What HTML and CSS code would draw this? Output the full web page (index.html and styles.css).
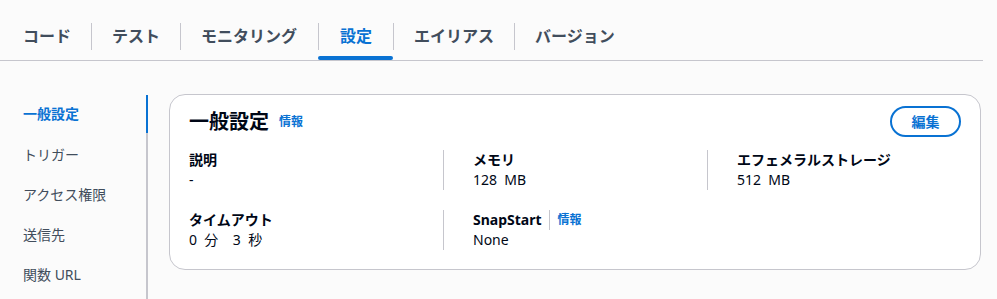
FILE: index.html
```html
<!DOCTYPE html>
<html lang="ja">
<head>
<meta charset="utf-8">
<title>設定</title>
<link rel="stylesheet" href="styles.css">
</head>
<body>
<nav class="tabs">
  <a class="tab first"><span class="tab-label">コード</span></a>
  <a class="tab"><span class="tab-label">テスト</span></a>
  <a class="tab"><span class="tab-label wide">モニタリング</span></a>
  <a class="tab active"><span class="tab-label">設定</span></a>
  <a class="tab"><span class="tab-label">エイリアス</span></a>
  <a class="tab"><span class="tab-label">バージョン</span></a>
</nav>
<div class="main">
  <ul class="side">
    <li class="side-item active">一般設定</li>
    <li class="side-item">トリガー</li>
    <li class="side-item">アクセス権限</li>
    <li class="side-item">送信先</li>
    <li class="side-item">関数 URL</li>
  </ul>
  <section class="card">
    <div class="card-head">
      <div class="title-wrap">
        <h2 class="title">一般設定</h2>
        <a class="info">情報</a>
      </div>
      <button class="edit">編集</button>
    </div>
    <div class="grid">
      <div class="cell">
        <div class="label">説明</div>
        <div class="value">-</div>
      </div>
      <div class="cell sep">
        <div class="label">メモリ</div>
        <div class="value">128&nbsp; MB</div>
      </div>
      <div class="cell sep">
        <div class="label">エフェメラルストレージ</div>
        <div class="value">512&nbsp; MB</div>
      </div>
      <div class="cell">
        <div class="label">タイムアウト</div>
        <div class="value">0&nbsp; 分&nbsp;&nbsp;&nbsp; 3&nbsp; 秒</div>
      </div>
      <div class="cell sep">
        <div class="label label-row"><span>SnapStart</span><span class="mini-sep"></span><a class="info">情報</a></div>
        <div class="value">None</div>
      </div>
    </div>
  </section>
</div>
</body>
</html>
```

FILE: styles.css
```css
* { box-sizing: border-box; }
html, body { margin: 0; padding: 0; }
body {
  background: #fbfbfb;
  font-family: "Noto Sans", "Noto Sans CJK JP", sans-serif;
  color: #000716;
  width: 997px;
  height: 299px;
  overflow: hidden;
}
.tabs {
  display: flex;
  padding: 23px 0 0 2px;
  margin-right: 14px;
  border-bottom: 1px solid #c6c6cd;
}
.tab {
  display: flex;
  flex-direction: column;
  color: #414d5c;
  font-weight: 700;
  font-size: 16px;
}
.tab-label {
  display: block;
  padding: 0 20px;
  line-height: 27px;
  border-left: 1px solid #c6c6cd;
}
.tab-label.wide { padding-right: 21px; }
.tab.first .tab-label { border-left-color: transparent; }
.tab::after {
  content: "";
  display: block;
  height: 4px;
  margin-top: 6px;
  border-radius: 2px;
  background: transparent;
}
.tab.active { color: #0972d3; }
.tab.active .tab-label { padding: 0 21px; }
.tab.active::after { background: #0972d3; }

.main {
  display: flex;
  margin-top: 33px;
  align-items: flex-start;
}
.side {
  list-style: none;
  margin: 1px 0 0 0;
  padding: 0 0 10px 23px;
  width: 148px;
  border-right: 2px solid #c6c6cd;
}
.side-item {
  font-size: 14px;
  line-height: 40px;
  height: 40px;
  color: #414d5c;
  margin-right: -2px;
  border-right: 2px solid transparent;
}
.side-item.active {
  color: #0972d3;
  font-weight: 700;
  border-right-color: #0972d3;
  line-height: 38px;
  height: 38px;
  margin-bottom: 2px;
}
.card {
  flex: 1;
  margin: 0 16px 0 21px;
  background: #fff;
  border: 1px solid #c6c6cd;
  border-radius: 16px;
  padding: 11px 19px 19px 19px;
}
.card-head {
  display: flex;
  align-items: center;
  justify-content: space-between;
  height: 31px;
  margin-bottom: 13px;
}
.title-wrap {
  display: flex;
  align-items: center;
  gap: 10px;
}
.title {
  margin: 0;
  font-size: 20px;
  line-height: 24px;
  font-weight: 700;
  color: #000716;
}
.info {
  color: #0972d3;
  font-size: 12px;
  font-weight: 700;
  line-height: 16px;
}
.edit {
  width: 71px;
  height: 31px;
  border: 2px solid #0972d3;
  border-radius: 16px;
  background: #fff;
  color: #0972d3;
  font-family: "Noto Sans", "Noto Sans CJK JP", sans-serif;
  font-size: 14px;
  font-weight: 700;
  line-height: 20px;
  padding: 0;
}
.grid {
  display: grid;
  grid-template-columns: 254px 264px 1fr;
  row-gap: 20px;
}
.cell { min-height: 40px; }
.cell.sep {
  border-left: 1px solid #c6c6cd;
  padding-left: 29px;
}
.label {
  font-size: 14px;
  font-weight: 700;
  line-height: 20px;
}
.label-row {
  display: flex;
  align-items: center;
}
.mini-sep {
  display: inline-block;
  width: 1px;
  height: 20px;
  background: #c6c6cd;
  margin: 0 8px 0 7px;
}
.value {
  font-size: 14px;
  line-height: 20px;
}
```
